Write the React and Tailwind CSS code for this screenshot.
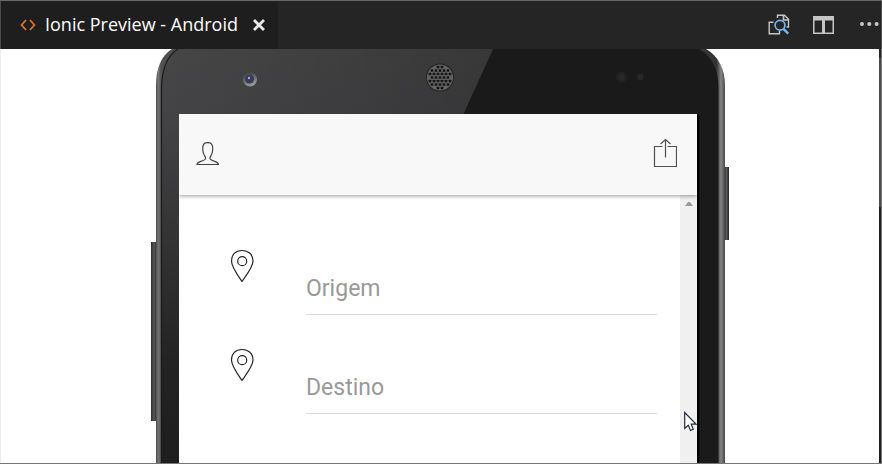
import React from 'react';

function CodeIcon() {
  return (
    <svg className="w-4 h-3 shrink-0" viewBox="0 0 16 12" fill="none" stroke="#d9752f" strokeWidth="1.8">
      <path d="M6 1 1.6 6 6 11M10 1l4.400 5L10 11" />
    </svg>
  );
}

function CloseIcon() {
  return (
    <svg className="w-3 h-3 shrink-0" viewBox="0 0 12 12" stroke="#e8e8e8" strokeWidth="2.8">
      <path d="m1 1 10 10M11 1 1 11" />
    </svg>
  );
}

function PreviewIcon() {
  return (
    <svg className="w-[22px] h-[22px]" viewBox="0 0 22 22" fill="none">
      <path d="M9.500 4V1.200h7l4 4V13h-2" stroke="#c5c5c5" strokeWidth="1.4" />
      <path d="M15.500 1v5h5" stroke="#c5c5c5" strokeWidth="1.6" />
      <path d="M5.500 8.200H1.200v11.600h10.300V17" stroke="#c5c5c5" strokeWidth="1.4" />
      <circle cx="12" cy="11.3" r="4.900" stroke="#75b5f0" strokeWidth="1.7" fill="#252526" />
      <path d="m15.200 14.600 5 5" stroke="#75b5f0" strokeWidth="2.4" />
    </svg>
  );
}

function SplitIcon() {
  return (
    <svg className="w-[21px] h-[18px]" viewBox="0 0 21 18">
      <path fill="#c5c5c5" fillRule="evenodd" d="M0 0h21v18H0zM1.500 4.500v12H9v-12zM12 4.500v12h7.500v-12z" />
    </svg>
  );
}

function MoreIcon() {
  return (
    <svg className="w-[19px] h-1" viewBox="0 0 19 4" fill="#c8c8c8">
      <circle cx="2" cy="2" r="2" />
      <circle cx="9.300" cy="2" r="2" />
      <circle cx="16.600" cy="2" r="2" />
    </svg>
  );
}

function TabBar() {
  return (
    <header className="flex h-[49px] shrink-0 border-t border-[#686868] bg-[#252526]">
      <div className="flex w-[278px] items-center border-l border-[#4a4a4a] bg-[#1e1e1e] pb-px pl-[19px]">
        <CodeIcon />
        <span className="ml-[9px] w-[194px] whitespace-nowrap font-['Open_Sans',sans-serif] text-[18px] text-white">
          Ionic Preview - Android
        </span>
        <span className="ml-[14px] flex"><CloseIcon /></span>
      </div>
      <div className="flex flex-1 items-center justify-end">
        <PreviewIcon />
        <span className="ml-[23px] mr-[26px]"><SplitIcon /></span>
        <span className="flex pb-[2px]"><MoreIcon /></span>
        <span className="ml-[2px] h-full w-px bg-[#505050]" />
      </div>
    </header>
  );
}

const HOLES = [];
for (let row = -3; row <= 3; row++) {
  for (let col = -3; col <= 3; col++) {
    const x = col * 4 + (row % 2 ? 2 : 0);
    const y = row * 3.5;
    if (x * x + y * y < 136) HOLES.push([x, y]);
  }
}

function DeviceArt() {
  return (
    <svg className="absolute inset-0 h-full w-full" viewBox="151 49 578 414">
      <defs>
        <linearGradient id="face" x1="0" y1="0" x2="0" y2="1">
          <stop offset="0" stopColor="#464647" />
          <stop offset=".15" stopColor="#444446" />
          <stop offset=".45" stopColor="#343435" />
          <stop offset=".75" stopColor="#232324" />
          <stop offset="1" stopColor="#1e1e1e" />
        </linearGradient>
        <linearGradient id="shade" x1="0" y1="0" x2="1" y2="0">
          <stop offset="0" stopColor="#000" stopOpacity="0" />
          <stop offset="1" stopColor="#000" stopOpacity=".2" />
        </linearGradient>
        <linearGradient id="rim" gradientUnits="userSpaceOnUse" x1="156" y1="0" x2="725" y2="0">
          <stop offset="0" stopColor="#4a4a4a" />
          <stop offset=".004" stopColor="#757576" />
          <stop offset=".009" stopColor="#505050" />
          <stop offset=".985" stopColor="#333" />
          <stop offset=".993" stopColor="#858585" />
          <stop offset="1" stopColor="#474747" />
        </linearGradient>
        <linearGradient id="key" x1="0" y1="0" x2="1" y2="0">
          <stop offset="0" stopColor="#29292b" />
          <stop offset=".5" stopColor="#58585b" />
          <stop offset="1" stopColor="#252527" />
        </linearGradient>
        <linearGradient id="lensRing" x1="0" y1="0" x2=".4" y2="1">
          <stop offset="0" stopColor="#38383b" />
          <stop offset="1" stopColor="#96979c" />
        </linearGradient>
      </defs>
      <path d="M151 242h6v179h-6z" fill="url(#key)" />
      <path d="M724 167h5v73h-5z" fill="url(#key)" />
      <path d="M156 463V86C156 68 161 56 172 49H706C718 56 725 68 725 86V463Z" fill="url(#rim)" />
      <path d="M161 463V88C161.500 70 166 56 179 49H493L463 115V463Z" fill="url(#face)" />
      <path d="M161 115V88C161.500 70 166 56 179 49H493L463 115Z" fill="url(#shade)" />
      <path d="M161.500 463V88C162 70 166 56 178 49" fill="none" stroke="#1b1b1c" strokeWidth="1.200" />
      <path d="M463 115 493 49H699C712 56 718.500 70 718.500 88V463H463Z" fill="#1a1a1a" />
      <path d="M697 114h2.300v349H697z" fill="#000" />
      <circle cx="250" cy="79.500" r="7" fill="url(#lensRing)" />
      <circle cx="249.500" cy="79" r="4.500" fill="#3c3d4c" />
      <circle cx="250" cy="79" r="2.800" fill="#34386c" />
      <circle cx="249" cy="78" r="1.200" fill="#a5abd5" />
      <circle cx="440" cy="77.500" r="14" fill="#242424" />
      <circle cx="440" cy="77.500" r="13" fill="#636363" />
      <g fill="#151515">
        {HOLES.map(([x, y]) => (
          <rect key={`${x},${y}`} x={438.7 + x} y={76.2 + y} width="2.600" height="2.600" rx=".6" />
        ))}
      </g>
      <circle cx="621.500" cy="77" r="5.500" fill="#222" />
      <circle cx="621.500" cy="77" r="3" fill="#292929" />
      <circle cx="640.500" cy="77" r="3.200" fill="#272727" />
    </svg>
  );
}

function PersonIcon() {
  return (
    <svg className="h-6 w-6" viewBox="0 0 24 24" fill="none" stroke="#444" strokeWidth="1.200">
      <path d="M1 22.500C1.300 20.300 3 19.900 5.200 19.200C8 18.400 9.700 17.900 9.600 16.300C9.500 14.500 8 13.500 7.200 10.300C6.600 7.500 6.500 4.200 7.800 2.200C9.200 0 14.200 0 15.600 2.200C17 4.200 16.900 7.500 16.300 10.300C15.500 13.500 14 14.500 13.900 16.300C13.800 17.900 15.500 18.400 18.300 19.200C20.500 19.900 22.200 20.300 22.500 22.500Z" />
    </svg>
  );
}

function ShareIcon() {
  return (
    <svg className="h-[30px] w-6" viewBox="0 0 24 30" fill="none" stroke="#505050" strokeWidth="1.200">
      <path d="M9.500 8.500H1.500V28.500H23.500V8.500H14.500M12.500 19.500V1.500M7.500 6l5-4.500L17.500 6" />
    </svg>
  );
}

function PinIcon() {
  return (
    <svg className="h-[33px] w-6 shrink-0" viewBox="0 0 24 33" fill="none" stroke="#252525" strokeWidth="1.200">
      <path d="M12 32.500C9.500 28.500 1.500 18.500 1.500 12C1.500 5.500 5.500 1.500 12 1.500S23 5.500 23 12C23 18.500 14.500 28.500 12 32.500Z" />
      <circle cx="12.200" cy="12.200" r="4.500" />
    </svg>
  );
}

function Field({ label }) {
  return (
    <div className="flex h-[99px] items-start pl-[51px] pt-[34px]">
      <PinIcon />
      <div className="ml-[52px] mt-[14px] h-[52px] w-[351px] border-b border-[#dcdcdc] pt-[9px] font-[Roboto,sans-serif] text-[23px] leading-[34px] text-[#999]">
        {label}
      </div>
    </div>
  );
}

function Screen() {
  return (
    <div className="relative ml-[28px] mt-[65px] flex h-[349px] w-[518px] flex-col bg-white">
      <div className="z-10 flex h-[81px] shrink-0 items-center justify-between bg-[#f8f8f8] pl-[17px] pr-[20px] shadow-[0_1px_4px_rgba(0,0,0,0.4)] [clip-path:inset(0_0_-8px_0)]">
        <span className="mb-[2px]"><PersonIcon /></span>
        <span className="mb-[4px]"><ShareIcon /></span>
      </div>
      <div className="flex min-h-0 flex-1">
        <main className="flex-1 pt-[20px]">
          <Field label="Origem" />
          <Field label="Destino" />
        </main>
        <div className="flex w-[17px] flex-col items-center bg-[#f0f0f0] pt-[7px]">
          <svg className="h-1 w-2" viewBox="0 0 8 4" fill="#9b9b9b"><path d="M0 4 3 0h2l3 4Z" /></svg>
        </div>
      </div>
    </div>
  );
}

export default function App() {
  return (
    <div className="relative flex h-[464px] w-[882px] flex-col overflow-hidden border-b border-[#777] bg-white">
      <TabBar />
      <div className="flex min-h-0 flex-1 border-l border-[#eee]">
        <div className="flex-1 pl-[150px]">
          <div className="relative flow-root h-[414px] w-[578px]">
            <DeviceArt />
            <Screen />
          </div>
        </div>
        <div className="flex w-[3px] flex-col border-r border-[#777]">
          <div className="h-[9px] bg-[#252526]" />
          <div className="h-[149px] bg-[#4b4b4b]" />
          <div className="flex-1 bg-[#1e1e1e]" />
        </div>
      </div>
      <svg className="absolute left-[684px] top-[411px] z-20 h-[21px] w-[13px]" viewBox="0 0 13 21">
        <path d="M.700 1.500V17.500L4.300 14.200 6.500 19.500 9.300 18.200 7.200 13.200H12Z" fill="#fff" stroke="#222b3d" strokeWidth="1.200" />
      </svg>
    </div>
  );
}
